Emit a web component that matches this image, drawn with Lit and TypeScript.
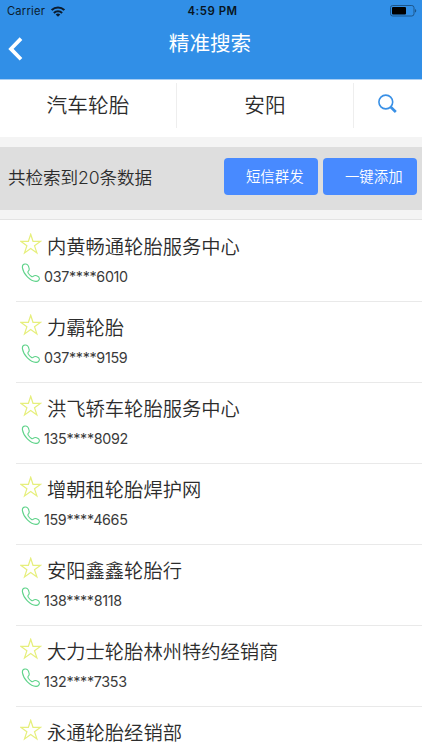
import { LitElement, html, css } from "lit";
import { customElement } from "lit/decorators.js";

const shops = [
  { name: "内黄畅通轮胎服务中心", phone: "037****6010" },
  { name: "力霸轮胎", phone: "037****9159" },
  { name: "洪飞轿车轮胎服务中心", phone: "135****8092" },
  { name: "增朝租轮胎焊护网", phone: "159****4665" },
  { name: "安阳鑫鑫轮胎行", phone: "138****8118" },
  { name: "大力士轮胎林州特约经销商", phone: "132****7353" },
  { name: "永通轮胎经销部", phone: "" },
];

@customElement("app-root")
export class AppRoot extends LitElement {
  static styles = css`
    :host {
      display: flex;
      flex-direction: column;
      height: 750px;
      overflow: hidden;
      background: #fff;
      color: #2c2c2c;
      font-family: Inter, "Noto Sans CJK SC", sans-serif;
      font-weight: 350;
    }
    svg { display: block; flex: none; }
    header { height: 80px; flex: none; background: #318fe7; border-bottom: 1px solid #a9cef3; box-sizing: border-box; }
    .status {
      display: grid;
      grid-template-columns: 1fr auto 1fr;
      align-items: center;
      height: 21px;
      padding: 0 5px 0 7px;
      color: #0b1c2e;
      font-size: 11.2px;
      font-weight: 400;
      line-height: 22px;
    }
    .carrier { display: flex; align-items: center; gap: 6px; letter-spacing: 0.2px; }
    .time { font-weight: 600; font-size: 11.4px; letter-spacing: 0.55px; padding-left: 1px; color: #081522; }
    .battery { justify-self: end; }
    .nav {
      display: grid;
      grid-template-columns: 40px 1fr 42px;
      height: 58px;
      color: #fff;
    }
    .back { padding: 15px 0 0 7px; }
    .title { text-align: center; font-size: 20.6px; font-weight: 400; line-height: 46px; }
    .search { display: flex; height: 57px; flex: none; padding-top: 3px; box-sizing: border-box; }
    .field {
      box-sizing: border-box;
      width: 177px;
      height: 45px;
      border-right: 1px solid #eee;
      text-align: center;
      font-size: 20.7px;
      line-height: 46px;
    }
    .go { flex: 1; padding: 11px 0 0 23px; }
    .summary {
      display: flex;
      align-items: center;
      gap: 4.5px;
      flex: none;
      height: 83px;
      box-sizing: border-box;
      border-top: 10px solid #f4f4f4;
      border-bottom: 1px solid #e3e3e3;
      padding: 0 5px 9px 8px;
      background: linear-gradient(#dedede 63px, #f4f4f4 63px);
    }
    .count { flex: 1; font-size: 17.6px; letter-spacing: -0.1px; padding-bottom: 4px; }
    .btn {
      box-sizing: border-box;
      width: 94.5px;
      height: 37px;
      border-radius: 4px;
      background: #488aff;
      color: #fff;
      font-size: 14.4px;
      line-height: 38px;
      text-align: center;
      padding-left: 8px;
      margin-bottom: 4px;
    }
    .row {
      flex: none;
      box-sizing: border-box;
      height: 81px;
      margin-left: 16px;
      padding: 12px 0 0 4px;
      border-bottom: 1px solid #e9e9e9;
    }
    .row:first-child { height: 82px; padding-top: 13px; }
    .line { display: flex; }
    .name { font-size: 19.3px; line-height: 28px; margin-left: 5px; }
    .phone { font-size: 14.3px; font-weight: 400; color: #3a3a3a; letter-spacing: -0.32px; line-height: 20px; margin: 6px 0 0 4px; }
    .call { margin: 2px 0 0 1px; }
  `;

  render() {
    return html`
      <header>
        <div class="status">
          <div class="carrier">
            Carrier
            <svg width="14" height="11" viewBox="0 0 14 11" fill="none" stroke="#0b1c2e" stroke-width="2.1">
              <path d="M.7 4.100a9 9 0 0 1 12.600 0M2.900 6.900a5.900 5.900 0 0 1 8.200 0" />
              <path d="M7 10.700 4.700 8.500a3.300 3.300 0 0 1 4.600 0Z" fill="#0b1c2e" stroke="none" />
            </svg>
          </div>
          <div class="time">4:59 PM</div>
          <svg class="battery" width="27" height="12" viewBox="0 0 27 12">
            <rect x=".5" y=".5" width="23.500" height="10.500" rx="2.200" fill="none" stroke="#1d568b" />
            <rect x="2" y="2" width="14" height="7.500" rx="1" fill="#000" />
            <path d="M25 4c1.700.4 1.700 3.200 0 3.600z" fill="#1d568b" />
          </svg>
        </div>
        <div class="nav">
          <div class="back">
            <svg width="17" height="26" viewBox="0 0 17 26" fill="none" stroke="#fff" stroke-width="3.700">
              <path d="M14 2.600 3.900 12.900 14 23.200" />
            </svg>
          </div>
          <div class="title">精准搜索</div>
        </div>
      </header>
      <div class="search">
        <div class="field">汽车轮胎</div>
        <div class="field">安阳</div>
        <div class="go">
          <svg width="21" height="21" viewBox="0 0 21 21" fill="none" stroke="#3990e6">
            <circle cx="8.800" cy="8" r="6.900" stroke-width="1.600" />
            <path d="m13.700 13 5.100 5" stroke-width="2.700" />
          </svg>
        </div>
      </div>
      <div class="summary">
        <div class="count">共检索到20条数据</div>
        <div class="btn">短信群发</div>
        <div class="btn">一键添加</div>
      </div>
      <div class="list">
        ${shops.map(
          (s) => html`<div class="row">
            <div class="line">
              <svg width="22" height="22" viewBox="0 0 22 22" fill="none" stroke="#e6ef7c" stroke-width="1.200">
                <path d="m10.700 1.300 2.300 7h7.700l-6.200 4.400 2.400 7.200-6.200-4.400-6.200 4.400 2.400-7.200L.7 8.300h7.700z" />
              </svg>
              <div class="name">${s.name}</div>
            </div>
            ${s.phone
              ? html`<div class="line">
                  <svg class="call" width="19" height="20" viewBox="0 0 19 20" fill="none" stroke="#5fd38a" stroke-width="1.100">
                    <path d="M4 1C2.200 1.200 1.200 2.700 1.400 4.700c.5 3.300 2.300 6.500 5 9.200 2.700 2.700 5.700 4.400 8.500 4.500 1.900.1 3.300-1 3.500-2.600.1-1.400-.9-2.400-2.700-3-1.500-.5-2.500-.3-3.200.4-.7.800-1.400.8-2.300.1-1.100-.8-2.100-1.900-2.900-3.100-.6-1-.5-1.700.2-2.300.9-.8.900-1.800.4-3.400C7.300 2 5.900.8 4 1Z" />
                  </svg>
                  <div class="phone">${s.phone}</div>
                </div>`
              : ""}
          </div>`
        )}
      </div>
    `;
  }
}
